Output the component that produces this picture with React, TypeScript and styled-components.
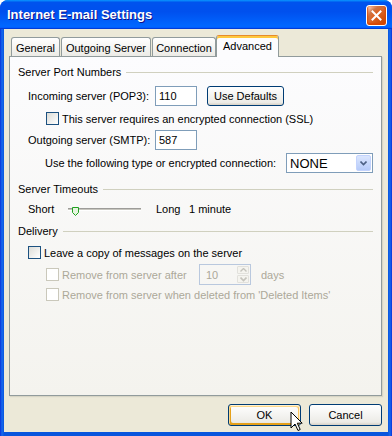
import React from 'react';
import styled, { createGlobalStyle, css } from 'styled-components';

const GlobalStyle = createGlobalStyle`
  html, body {
    margin: 0;
    padding: 0;
    background: #fff;
  }
  body {
    font-family: 'Liberation Sans', Arial, sans-serif;
    font-size: 11px;
    color: #000;
  }
  * {
    box-sizing: border-box;
  }
`;

const Window = styled.div`
  position: relative;
  width: 392px;
  height: 436px;
  display: flex;
  flex-direction: column;
  background: linear-gradient(90deg, #0831d9 0, #166aee 2px, #0855dd 4px, #0855dd 388px, #166aee 390px, #0831d9 392px);
  border-radius: 8px 8px 0 0;
  overflow: hidden;
`;

const TitleBar = styled.div`
  flex: none;
  height: 29px;
  display: flex;
  align-items: flex-start;
  justify-content: space-between;
  padding: 5px 5px 0 7px;
  background: linear-gradient(180deg, #0997ff, #0053ee 8%, #0050ee 40%, #0066ff 88%, #0066ff 93%, #005bff 95%, #003dd7 96%, #003dd7);
`;

const Title = styled.div`
  margin-top: 2px;
  font-family: 'Liberation Sans', Arial, sans-serif;
  font-weight: bold;
  font-size: 13px;
  line-height: 16px;
  color: #fff;
  text-shadow: 1px 1px #0f1089;
`;

const CloseButton = styled.div`
  width: 21px;
  height: 21px;
  display: flex;
  align-items: center;
  justify-content: center;
  border: 1px solid #fff;
  border-radius: 3px;
  background: radial-gradient(circle at 90% 90%, #cc4600 0%, #dc6527 55%, #cd7546 70%, #ffccb2 90%, #fff 100%);
  box-shadow: inset 0 -1px 2px 1px #da4600;
`;

const Body = styled.div`
  flex: 1;
  margin: 0 4px 4px 4px;
  padding: 6px 6px 0 5px;
  display: flex;
  flex-direction: column;
  background: #ece9d8;
`;

const TabRow = styled.div`
  position: relative;
  z-index: 1;
  height: 21px;
  display: flex;
  align-items: flex-end;
  gap: 1px;
  padding-left: 2px;
`;

const Tab = styled.div<{ $w: number; $active?: boolean }>`
  width: ${(p) => p.$w}px;
  height: 19px;
  padding-top: 2px;
  display: flex;
  align-items: center;
  justify-content: center;
  border: 1px solid #919b9c;
  border-bottom: none;
  border-radius: 3px 3px 0 0;
  background: linear-gradient(180deg, #fff, #ecebe6);
  white-space: nowrap;

  ${(p) =>
    p.$active &&
    css`
      height: 22px;
      margin-bottom: -1px;
      margin-left: -1px;
      padding: 0 0 1px;
      border-top: 1px solid #e68b2c;
      background: #fcfcfe;
      box-shadow: inset 0 2px #ffc83c;
    `}
`;

const Panel = styled.div`
  height: 340px;
  padding: 0 8px;
  display: flex;
  flex-direction: column;
  border: 1px solid #919b9c;
  background: linear-gradient(180deg, #fcfcfe, #f4f3ee);
  box-shadow: 1px 1px 1px 0 rgba(208, 206, 191, 0.75);
`;

const Row = styled.div<{ $mt: number; $h: number; $indent?: number }>`
  display: flex;
  align-items: center;
  margin-top: ${(p) => p.$mt}px;
  height: ${(p) => p.$h}px;
  padding-left: ${(p) => p.$indent ?? 0}px;
  white-space: nowrap;
`;

const GroupLine = styled.div`
  flex: 1;
  margin-left: 5px;
  border-top: 1px solid #d0d0bf;
`;

const FieldLabel = styled.span<{ $w: number; $disabled?: boolean }>`
  flex: none;
  width: ${(p) => p.$w}px;
  color: ${(p) => (p.$disabled ? '#aca899' : '#000')};
`;

const TextBox = styled.div`
  width: 42px;
  height: 20px;
  padding: 0 3px;
  display: flex;
  align-items: center;
  border: 1px solid #7f9db9;
  background: #fff;
`;

const Button = styled.button<{ $w: number; $h: number; $hot?: boolean }>`
  width: ${(p) => p.$w}px;
  height: ${(p) => p.$h}px;
  padding: 0;
  font-family: inherit;
  font-size: 11px;
  color: #000;
  border: 1px solid #003c74;
  border-radius: 3px;
  background: linear-gradient(180deg, #fff, #ecebe6 86%, #d6d0c5);
  box-shadow: ${(p) =>
    p.$hot
      ? 'inset -1px 1px #fff0cf, inset 1px 2px #fdd889, inset -2px 2px #fbc761, inset 2px -2px #e5a01a'
      : 'none'};
`;

const CheckBox = styled.span<{ $disabled?: boolean }>`
  flex: none;
  width: 13px;
  height: 13px;
  border: 1px solid ${(p) => (p.$disabled ? '#cac8bb' : '#1c5180')};
  background: ${(p) => (p.$disabled ? '#fff' : 'linear-gradient(135deg, #dcdcd7, #fff)')};
`;

const CheckText = styled.span<{ $disabled?: boolean }>`
  margin-left: 3px;
  color: ${(p) => (p.$disabled ? '#aca899' : '#000')};
`;

const Select = styled.div`
  width: 87px;
  height: 20px;
  padding-left: 3px;
  display: flex;
  align-items: center;
  justify-content: space-between;
  border: 1px solid #7f9db9;
  background: #fff;
  font-size: 13px;
`;

const SelectButton = styled.div`
  width: 15px;
  height: 16px;
  margin: 1px;
  display: flex;
  align-items: center;
  justify-content: center;
  border: 1px solid #c3d3fd;
  border-radius: 2px;
  background: linear-gradient(180deg, #dbe6fe, #b6cbf9);
`;

const SliderTrack = styled.div`
  position: relative;
  width: 73px;
  height: 3px;
  border-top: 1px solid #9d9c99;
  border-bottom: 1px solid #fff;
  background: #c7c6bf;
`;

const SliderThumb = styled.svg`
  position: absolute;
  left: 4px;
  top: -2px;
`;

const Spinner = styled.div`
  width: 52px;
  height: 21px;
  display: flex;
  border: 1px solid #b9c8de;
  color: #aca899;
`;

const SpinValue = styled.div`
  flex: 1;
  padding-left: 6px;
  display: flex;
  align-items: center;
`;

const SpinButtons = styled.div`
  width: 12px;
  margin: 1px;
  display: flex;
  flex-direction: column;
  gap: 1px;
`;

const SpinButton = styled.div`
  flex: 1;
  display: flex;
  align-items: center;
  justify-content: center;
  border: 1px solid #e2e1dc;
  border-radius: 1px;
  background: #f5f4ef;
`;

const ButtonRow = styled.div`
  margin-top: 8px;
  display: flex;
  justify-content: flex-end;
  gap: 8px;
`;

const Cursor = styled.svg`
  position: absolute;
  left: 290px;
  top: 411px;
`;

const GroupHeader = ({ mt, children }: { mt: number; children: React.ReactNode }) => (
  <Row $mt={mt} $h={14}>
    <span>{children}</span>
    <GroupLine />
  </Row>
);

const Chevron = ({ color }: { color: string }) => (
  <svg width='7' height='5' viewBox='0 0 7 5'>
    <path d='M0.5 0.5 L3.5 3.5 L6.5 0.5' fill='none' stroke={color} strokeWidth='1.6' />
  </svg>
);

export default function App() {
  return (
    <>
      <GlobalStyle />
      <Window>
        <TitleBar>
          <Title>Internet E-mail Settings</Title>
          <CloseButton>
            <svg width='11' height='11' viewBox='0 0 11 11'>
              <path d='M1.5 1.5 L9.5 9.5 M9.5 1.5 L1.5 9.5' stroke='#fff' strokeWidth='2' strokeLinecap='square' />
            </svg>
          </CloseButton>
        </TitleBar>
        <Body>
          <TabRow>
            <Tab $w={49}>General</Tab>
            <Tab $w={90}>Outgoing Server</Tab>
            <Tab $w={64}>Connection</Tab>
            <Tab $w={63} $active>
              Advanced
            </Tab>
          </TabRow>
          <Panel>
            <GroupHeader mt={8}>Server Port Numbers</GroupHeader>
            <Row $mt={7} $h={20} $indent={10}>
              <FieldLabel $w={127}>Incoming server (POP3):</FieldLabel>
              <TextBox>110</TextBox>
              <Button $w={77} $h={20} style={{ marginLeft: 10 }}>
                Use Defaults
              </Button>
            </Row>
            <Row $mt={6} $h={13} $indent={28}>
              <CheckBox />
              <CheckText>This server requires an encrypted connection (SSL)</CheckText>
            </Row>
            <Row $mt={5} $h={20} $indent={10}>
              <FieldLabel $w={127}>Outgoing server (SMTP):</FieldLabel>
              <TextBox>587</TextBox>
            </Row>
            <Row $mt={3} $h={20} $indent={27}>
              <FieldLabel $w={241}>Use the following type or encrypted connection:</FieldLabel>
              <Select>
                NONE
                <SelectButton>
                  <Chevron color='#4d6185' />
                </SelectButton>
              </Select>
            </Row>

            <GroupHeader mt={9}>Server Timeouts</GroupHeader>
            <Row $mt={5} $h={16} $indent={10}>
              <FieldLabel $w={40}>Short</FieldLabel>
              <SliderTrack>
                <SliderThumb width='7' height='9' viewBox='0 0 7 9'>
                  <path d='M0.5 0.5 H6.5 V5.5 L3.5 8.5 L0.5 5.5 Z' fill='#e6f5df' stroke='#21a121' />
                </SliderThumb>
              </SliderTrack>
              <FieldLabel $w={33} style={{ marginLeft: 15 }}>
                Long
              </FieldLabel>
              <span>1 minute</span>
            </Row>

            <GroupHeader mt={7}>Delivery</GroupHeader>
            <Row $mt={8} $h={13} $indent={10}>
              <CheckBox />
              <CheckText>Leave a copy of messages on the server</CheckText>
            </Row>
            <Row $mt={5} $h={21} $indent={28}>
              <CheckBox $disabled />
              <FieldLabel $w={137} $disabled style={{ marginLeft: 3 }}>
                Remove from server after
              </FieldLabel>
              <Spinner>
                <SpinValue>10</SpinValue>
                <SpinButtons>
                  <SpinButton>
                    <svg width='7' height='4' viewBox='0 0 7 4'>
                      <path d='M0.5 3.5 L3.5 0.5 L6.5 3.5' fill='none' stroke='#c5c4bd' strokeWidth='1.4' />
                    </svg>
                  </SpinButton>
                  <SpinButton>
                    <Chevron color='#c5c4bd' />
                  </SpinButton>
                </SpinButtons>
              </Spinner>
              <FieldLabel $w={30} $disabled style={{ marginLeft: 10 }}>
                days
              </FieldLabel>
            </Row>
            <Row $mt={3} $h={13} $indent={28}>
              <CheckBox $disabled />
              <CheckText $disabled>Remove from server when deleted from 'Deleted Items'</CheckText>
            </Row>
          </Panel>
          <ButtonRow>
            <Button $w={73} $h={22} $hot>
              OK
            </Button>
            <Button $w={73} $h={22}>
              Cancel
            </Button>
          </ButtonRow>
        </Body>
        <Cursor width='13' height='21' viewBox='0 0 13 21'>
          <path d='M1 1 V17 L5 13 L8 19.5 L10.2 18.5 L7.3 12.2 H12.2 Z' fill='#fff' stroke='#000' strokeLinejoin='miter' />
        </Cursor>
      </Window>
    </>
  );
}
